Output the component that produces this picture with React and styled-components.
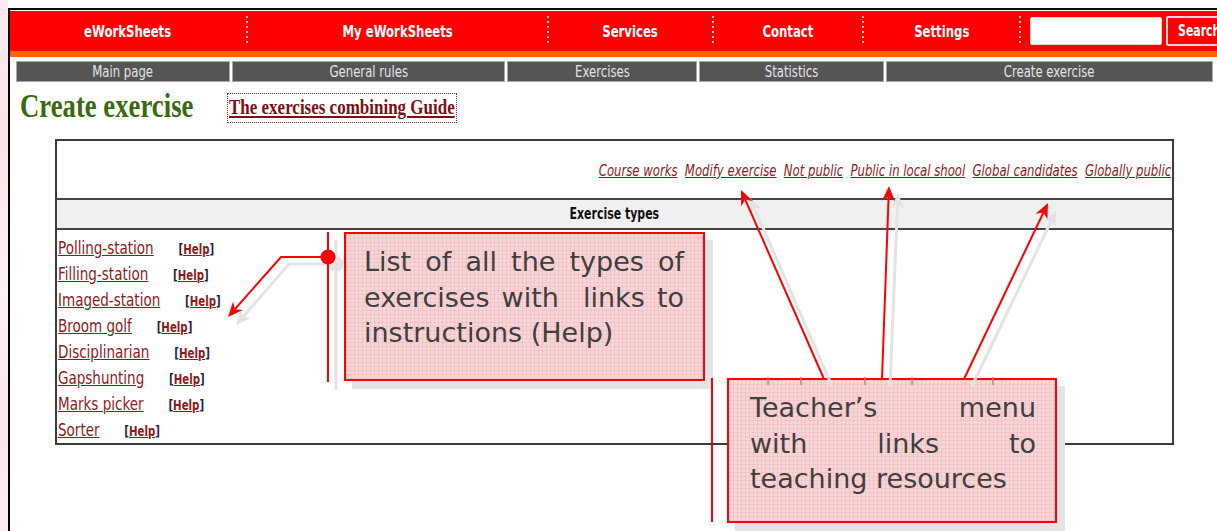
import React from 'react';
import styled, { createGlobalStyle } from 'styled-components';

const SANS = `"DejaVu Sans", Verdana, sans-serif`;
const SERIF = `"Liberation Serif", "Times New Roman", serif`;

const GlobalStyle = createGlobalStyle`
  html, body { margin: 0; padding: 0; background: #fff; }
  body { font-family: ${SANS}; overflow: hidden; }
  * { box-sizing: border-box; }
`;

const Squeeze = styled.span`
  display: inline-block;
  white-space: nowrap;
  transform: scaleX(${p => p.$k ?? 0.73});
  transform-origin: ${p => p.$o ?? 'center'};
`;

const Slide = styled.div`
  position: relative;
  width: 1217px;
  height: 531px;
  overflow: hidden;
  display: flex;
  background: #fff;
`;

const Strip = styled.div`
  width: 8px;
  flex-shrink: 0;
  background: linear-gradient(180deg, #fdeaee 0%, #fbe1e6 25%, #fdf1f3 55%, #fbe4e9 80%, #fdeef1 100%);
`;

const Main = styled.div`
  flex: 1;
  min-width: 0;
  padding-top: 8px;
  display: flex;
  flex-direction: column;
`;

const Frame = styled.div`
  flex: 1;
  border-top: 2px solid #000;
  border-left: 2px solid #000;
  padding-top: 1px;
  display: flex;
  flex-direction: column;
`;

const TopBar = styled.div`
  height: 46px;
  background: #ff0000;
  border-bottom: 6px solid #ff6600;
  display: flex;
  align-items: center;
`;

const NavItem = styled.div`
  width: ${p => p.$w}px;
  flex-shrink: 0;
  display: flex;
  justify-content: center;
  align-items: center;
  color: #fff;
  font-family: ${SANS};
  font-weight: bold;
  font-size: 16px;
`;

const NavSep = styled.div`
  width: 2px;
  height: 30px;
  flex-shrink: 0;
  background: repeating-linear-gradient(to bottom, #ffc4c4 0 2px, transparent 2px 5px);
`;

const SearchBox = styled.div`
  display: flex;
  align-items: center;
  gap: 4px;
  margin-left: 9px;
`;

const SearchInput = styled.div`
  width: 132px;
  height: 28px;
  background: #fff;
  border: 1px solid #d6d6d6;
  border-radius: 2px;
`;

const SearchButton = styled.div`
  width: 80px;
  height: 30px;
  flex-shrink: 0;
  background: #ff0000;
  border: 2px solid #d8d8d8;
  border-radius: 2px;
  color: #fff;
  font-family: ${SANS};
  font-weight: bold;
  font-size: 15px;
  line-height: 26px;
  padding-left: 10px;
`;

const Tabs = styled.div`
  display: flex;
  gap: 2px;
  margin: 4px 0 0 6px;
`;

const Tab = styled.div`
  width: ${p => p.$w}px;
  height: 21px;
  flex-shrink: 0;
  background: #555555;
  border: 1px solid #a9a9a9;
  color: #e4e4e4;
  font-family: ${SANS};
  font-size: 16px;
  line-height: 19px;
  text-align: center;
`;

const HeadingRow = styled.div`
  display: flex;
  align-items: flex-start;
  margin-top: 11px;
  padding-left: 10px;
  height: 30px;
`;

const Title = styled.h1`
  width: 207px;
  flex-shrink: 0;
  margin: -5px 0 0 0;
  font-family: ${SERIF};
  font-weight: bold;
  font-size: 33px;
  line-height: 36px;
  color: #3b6910;
`;

const Guide = styled.a`
  display: block;
  width: 230px;
  height: 30px;
  border: 1px dotted #8b2a2a;
  padding-left: 1px;
  font-family: ${SERIF};
  font-weight: bold;
  font-size: 21.5px;
  line-height: 27px;
  color: #7d0f14;

  ${Squeeze} {
    text-decoration: underline;
    text-decoration-thickness: 2px;
    text-underline-offset: 2px;
  }
`;

const Table = styled.div`
  margin: 16px 0 0 45px;
  width: 1119px;
  border: 2px solid #3c3c3c;
  display: flex;
  flex-direction: column;
  background: #fff;
`;

const MenuCell = styled.div`
  height: 57px;
  display: flex;
  align-items: center;
  justify-content: flex-end;
  padding-right: 1px;
  padding-top: 2px;
`;

const MenuLink = styled.a`
  margin-left: 10px;
  font-family: ${SANS};
  font-style: italic;
  font-size: 16px;
  color: #8c1a1a;
  text-decoration: underline;
`;

const HeaderCell = styled.div`
  height: 30px;
  border-top: 2px solid #444;
  background: #f0f0f0;
  display: flex;
  align-items: center;
  justify-content: center;
  font-family: ${SANS};
  font-weight: bold;
  font-size: 15px;
  color: #111;
`;

const Body = styled.div`
  border-top: 2px solid #444;
  padding: 5px 0 0 1px;
  height: 215px;
`;

const TypeList = styled.div`
  transform: scaleX(0.73);
  transform-origin: left center;
`;

const TypeRow = styled.div`
  height: 26px;
  display: flex;
  align-items: baseline;
  white-space: nowrap;
`;

const TypeLink = styled.a`
  font-family: ${SANS};
  font-size: 18.5px;
  line-height: 26px;
  color: #8c1a1a;
  text-decoration: underline;
`;

const Help = styled.span`
  margin-left: 34px;
  font-family: ${SANS};
  font-weight: bold;
  font-size: 14px;
  color: #1d1d4f;

  a {
    color: #8c1a1a;
    text-decoration: underline;
  }
`;

const Callout = styled.div`
  position: absolute;
  left: ${p => p.$x}px;
  top: ${p => p.$y}px;
  width: ${p => p.$w}px;
  height: ${p => p.$h}px;
  padding: ${p => p.$pad};
  border: 2px solid #ff0000;
  background-color: #f8d5d7;
  background-image:
    linear-gradient(rgba(240, 170, 175, 0.35) 1px, transparent 1px),
    linear-gradient(90deg, rgba(240, 170, 175, 0.35) 1px, transparent 1px);
  background-size: 4px 4px;
  box-shadow: 8px 8px 0 #e4e4e4;
  font-family: ${SANS};
  font-size: 27px;
  line-height: 35.5px;
  color: #3f3f3f;
  z-index: 2;
`;

const Line = styled.span`
  display: block;
  white-space: nowrap;
  text-align: ${p => (p.$justify ? 'justify' : 'left')};
  text-align-last: ${p => (p.$justify ? 'justify' : 'left')};
`;

const Overlay = styled.svg`
  position: absolute;
  left: 0;
  top: 0;
  z-index: 3;
  pointer-events: none;
`;

function head(x1, y1, x2, y2, len = 15, w = 6.5) {
  const dx = x2 - x1;
  const dy = y2 - y1;
  const L = Math.hypot(dx, dy);
  const ux = dx / L;
  const uy = dy / L;
  const px = -uy;
  const py = ux;
  const bx = x2 - ux * len;
  const by = y2 - uy * len;
  const nx = x2 - ux * len * 0.7;
  const ny = y2 - uy * len * 0.7;
  return {
    pts: `${x2},${y2} ${bx + px * w},${by + py * w} ${nx},${ny} ${bx - px * w},${by - py * w}`,
    nx,
    ny,
  };
}

function Arrow({ x1, y1, x2, y2, color, width }) {
  const h = head(x1, y1, x2, y2);
  return (
    <g>
      <line x1={x1} y1={y1} x2={h.nx} y2={h.ny} stroke={color} strokeWidth={width} />
      <polygon points={h.pts} fill={color} />
    </g>
  );
}

function Annotations() {
  const red = '#ff0000';
  const gray = '#e3e3e3';
  const h1 = head(281, 257, 228, 317);
  const h1s = head(289, 264, 236, 325);
  return (
    <Overlay width="1217" height="531" viewBox="0 0 1217 531">
      {/* shadows */}
      <line x1="336" y1="240" x2="336" y2="390" stroke={gray} strokeWidth="3" />
      <circle cx="336" cy="264" r="7.5" fill={gray} />
      <polyline points={`336,264 289,264 ${h1s.nx},${h1s.ny}`} fill="none" stroke={gray} strokeWidth="3" />
      <polygon points={h1s.pts} fill={gray} />
      <Arrow x1={832} y1={386} x2={750} y2={198} color={gray} width={3} />
      <Arrow x1={890} y1={386} x2={898} y2={193} color={gray} width={3} />
      <Arrow x1={972} y1={386} x2={1056} y2={211} color={gray} width={3} />

      {/* callout 1 connector */}
      <line x1="328" y1="232" x2="328" y2="382" stroke={red} strokeWidth="2" />
      <polyline points={`328,257 281,257 ${h1.nx},${h1.ny}`} fill="none" stroke={red} strokeWidth="2" />
      <polygon points={h1.pts} fill={red} />
      <circle cx="328" cy="257" r="7.5" fill={red} />

      {/* callout 2 connectors */}
      <line x1="712" y1="378" x2="712" y2="522" stroke={red} strokeWidth="2" />
      <Arrow x1={824} y1={379} x2={741} y2={190} color={red} width={2} />
      <Arrow x1={882} y1={379} x2={889} y2={186} color={red} width={2} />
      <Arrow x1={964} y1={379} x2={1048} y2={203} color={red} width={2} />
      {[768, 801, 865, 912, 993].map(x => (
        <line key={x} x1={x} y1="377" x2={x} y2="385" stroke="#ff6b6b" strokeWidth="1.5" />
      ))}
    </Overlay>
  );
}

const navItems = [
  { label: 'eWorkSheets', w: 236 },
  { label: 'My eWorkSheets', w: 299 },
  { label: 'Services', w: 163 },
  { label: 'Contact', w: 148 },
  { label: 'Settings', w: 155 },
];

const tabs = [
  { label: 'Main page', w: 214 },
  { label: 'General rules', w: 273 },
  { label: 'Exercises', w: 190 },
  { label: 'Statistics', w: 185 },
  { label: 'Create exercise', w: 327 },
];

const menuLinks = [
  'Course works',
  'Modify exercise',
  'Not public',
  'Public in local shool',
  'Global candidates',
  'Globally public',
];

const types = [
  'Polling-station',
  'Filling-station',
  'Imaged-station',
  'Broom golf',
  'Disciplinarian',
  'Gapshunting',
  'Marks picker',
  'Sorter',
];

export default function App() {
  return (
    <>
      <GlobalStyle />
      <Slide>
        <Strip />
        <Main>
          <Frame>
            <TopBar>
              {navItems.map(item => (
                <React.Fragment key={item.label}>
                  <NavItem $w={item.w}>
                    <Squeeze>{item.label}</Squeeze>
                  </NavItem>
                  <NavSep />
                </React.Fragment>
              ))}
              <SearchBox>
                <SearchInput />
                <SearchButton>
                  <Squeeze $o="left">Search</Squeeze>
                </SearchButton>
              </SearchBox>
            </TopBar>

            <Tabs>
              {tabs.map(t => (
                <Tab key={t.label} $w={t.w}>
                  <Squeeze>{t.label}</Squeeze>
                </Tab>
              ))}
            </Tabs>

            <HeadingRow>
              <Title>
                <Squeeze $k={0.81} $o="left">Create exercise</Squeeze>
              </Title>
              <Guide>
                <Squeeze $k={0.79} $o="left">The exercises combining Guide</Squeeze>
              </Guide>
            </HeadingRow>

            <Table>
              <MenuCell>
                <Squeeze $o="right">
                  {menuLinks.map(l => (
                    <MenuLink key={l}>{l}</MenuLink>
                  ))}
                </Squeeze>
              </MenuCell>
              <HeaderCell>
                <Squeeze>Exercise types</Squeeze>
              </HeaderCell>
              <Body>
                <TypeList>
                  {types.map(t => (
                    <TypeRow key={t}>
                      <TypeLink>{t}</TypeLink>
                      <Help>
                        [<a>Help</a>]
                      </Help>
                    </TypeRow>
                  ))}
                </TypeList>
              </Body>
            </Table>
          </Frame>
        </Main>

        <Callout $x={344} $y={232} $w={361} $h={149} $pad="10px 19px 0 18px">
          <Line $justify>List of all the types of</Line>
          <Line $justify>exercises with&nbsp; links to</Line>
          <Line>instructions (Help)</Line>
        </Callout>
        <Callout $x={727} $y={378} $w={330} $h={145} $pad="10px 19px 0 21px">
          <Line $justify>Teacher’s menu</Line>
          <Line $justify>with links to</Line>
          <Line>teaching resources</Line>
        </Callout>

        <Annotations />
      </Slide>
    </>
  );
}
